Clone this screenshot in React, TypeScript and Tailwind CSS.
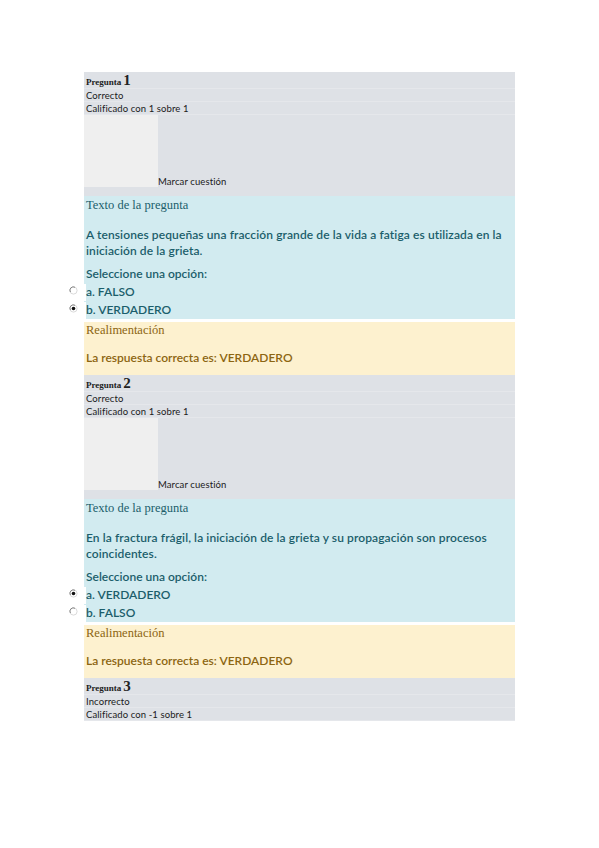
import React from 'react'

interface Question {
  num: number
  state: string
  grade: string
  text?: string[]
  options?: { label: string; checked: boolean }[]
  answer?: string
}

const questions: Question[] = [
  {
    num: 1,
    state: 'Correcto',
    grade: 'Calificado con 1 sobre 1',
    text: [
      'A tensiones pequeñas una fracción grande de la vida a fatiga es utilizada en la',
      'iniciación de la grieta.',
    ],
    options: [
      { label: 'a. FALSO', checked: false },
      { label: 'b. VERDADERO', checked: true },
    ],
    answer: 'La respuesta correcta es: VERDADERO',
  },
  {
    num: 2,
    state: 'Correcto',
    grade: 'Calificado con 1 sobre 1',
    text: [
      'En la fractura frágil, la iniciación de la grieta y su propagación son procesos',
      'coincidentes.',
    ],
    options: [
      { label: 'a. VERDADERO', checked: true },
      { label: 'b. FALSO', checked: false },
    ],
    answer: 'La respuesta correcta es: VERDADERO',
  },
  {
    num: 3,
    state: 'Incorrecto',
    grade: 'Calificado con -1 sobre 1',
  },
]

const sans = "font-['Lato','Liberation_Sans',sans-serif]"
const serif = "font-['Liberation_Serif','DejaVu_Serif',serif]"

function Radio({ checked }: { checked: boolean }) {
  return (
    <svg width="9" height="9" viewBox="0 0 9 9">
      <circle cx="4.5" cy="4.5" r="3.6" fill="#fff" stroke="#d0d0d0" strokeWidth="0.8" />
      <path d="M1.4 6 A3.4 3.4 0 0 1 6 1.3" fill="none" stroke="#7a7a7a" strokeWidth="0.9" />
      {checked && <circle cx="4.5" cy="4.5" r="1.8" fill="#111" />}
    </svg>
  )
}

function Header({ q }: { q: Question }) {
  return (
    <>
      <div className="h-[17px] flex items-end pl-[2px] border-b border-[#e5e7eb]">
        <span className={`${serif} text-[9px] font-bold text-[#222] leading-none mb-[1px]`}>Pregunta</span>
        <span className={`${serif} text-[15px] font-bold text-[#222] leading-none ml-[2px]`}>{q.num}</span>
      </div>
      <div className={`${sans} h-[13px] pl-[2px] text-[9.5px] leading-[13px] tracking-[0.1px] text-[#1a1a1a] border-b border-[#e5e7eb]`}>{q.state}</div>
      <div className={`${sans} h-[13px] pl-[2px] text-[9.5px] leading-[13px] tracking-[0.1px] text-[#1a1a1a] border-b border-[#e5e7eb]`}>{q.grade}</div>
    </>
  )
}

function QuestionBlock({ q }: { q: Question }) {
  if (!q.text) {
    return (
      <div className="bg-[#dee1e6]">
        <Header q={q} />
      </div>
    )
  }
  return (
    <div>
      <div className="bg-[#dee1e6] h-[124px]">
        <Header q={q} />
        <div className="flex items-end">
          <div className="w-[74px] h-[72px] bg-[#efefef]" />
          <span className={`${sans} text-[9.5px] leading-[10px] tracking-[0.1px] text-[#1a1a1a]`}>Marcar cuestión</span>
        </div>
      </div>

      <div className="bg-[#d2ebf0] h-[123px] pt-[1px] text-[#1b5e6b]">
        <div className={`${serif} text-[12.5px] leading-[16px] pl-[2px]`}>Texto de la pregunta</div>
        <div className={`${sans} font-semibold text-[12px] leading-[16px] tracking-[0.1px] pl-[2px] mt-[14px]`}>
          {q.text.map(t => (
            <div key={t}>{t}</div>
          ))}
        </div>
        <div className={`${sans} font-semibold text-[12px] leading-[16px] pl-[2px] mt-[7px]`}>Seleccione una opción:</div>
        <div className="mt-[1px]">
          {q.options!.map(o => (
            <div key={o.label} className="flex items-center h-[18px]">
              <div className="-ml-[18px] w-[20px] h-[17px] bg-white flex items-start pt-[2px] pl-[3px]">
                <Radio checked={o.checked} />
              </div>
              <span className={`${sans} font-semibold text-[12px] leading-[16px]`}>{o.label}</span>
            </div>
          ))}
        </div>
      </div>

      <div className="bg-[#fdf1cf] h-[53px] mt-[3px] text-[#8c6511]">
        <div className={`${serif} text-[12.5px] leading-[16px] pl-[2px]`}>Realimentación</div>
        <div className={`${sans} font-semibold text-[12px] leading-[16px] pl-[2px] mt-[12px]`}>{q.answer}</div>
      </div>
    </div>
  )
}

export default function App() {
  return (
    <div className="w-[599px] h-[848px] bg-white pt-[72px] pl-[84px]">
      <div className="w-[431px]">
        {questions.map(q => (
          <QuestionBlock key={q.num} q={q} />
        ))}
      </div>
    </div>
  )
}
